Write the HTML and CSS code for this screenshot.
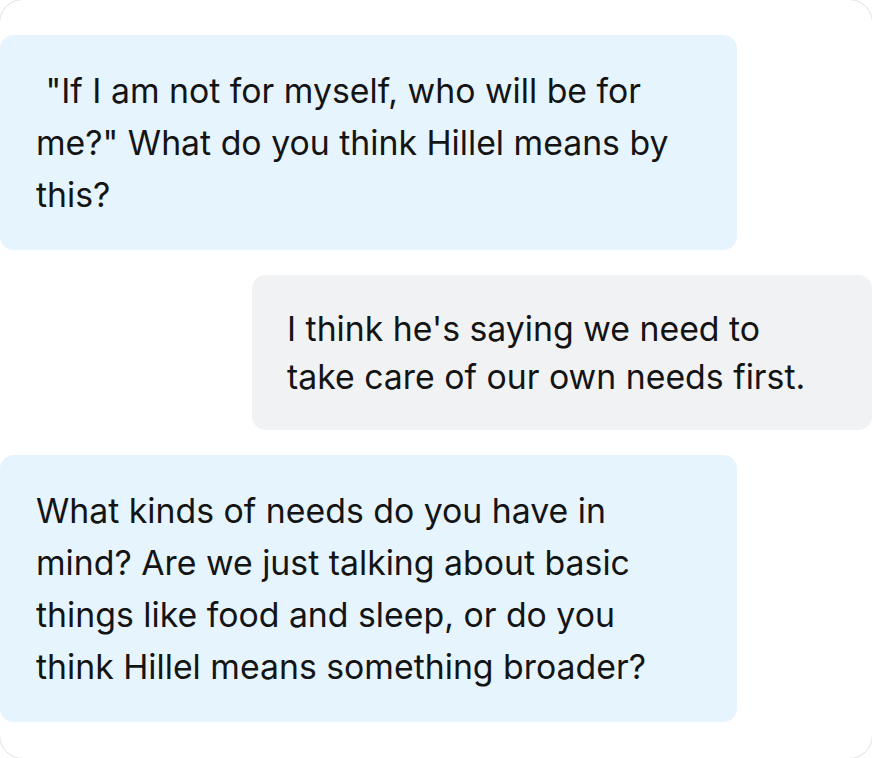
FILE: index.html
```html
<!DOCTYPE html>
<html lang="en">
<head>
<meta charset="utf-8">
<title>Chat</title>
<link rel="stylesheet" href="styles.css">
</head>
<body>
<div class="frame">
  <div class="thread">
    <div class="msg msg-assistant"><p class="text"> "If I am not for myself, who will be for me?" What do you think Hillel means by this?</p></div>
    <div class="msg msg-user"><p class="text">I think he's saying we need to take care of our own needs first.</p></div>
    <div class="msg msg-assistant"><p class="text">What kinds of needs do you have in mind? Are we just talking about basic things like food and sleep, or do you think Hillel means something broader?</p></div>
  </div>
</div>
</body>
</html>
```

FILE: styles.css
```css
html, body {
  margin: 0;
  padding: 0;
  background: #ffffff;
  overflow: hidden;
}
.frame {
  box-sizing: border-box;
  width: 874px;
  height: 760px;
  margin: -1px;
  border: 1px solid #e3e3e3;
  border-radius: 24px;
  background: #ffffff;
}
.thread {
  display: flex;
  flex-direction: column;
  gap: 25px;
  padding-top: 35px;
}
.msg {
  box-sizing: border-box;
  border-radius: 14px;
  padding: 29.5px 36px;
  font-family: "Inter", "Noto Sans", sans-serif;
  font-size: 33.8px;
  color: #141414;
}
.text {
  margin: 0;
  white-space: pre-wrap;
}
.msg-assistant {
  align-self: flex-start;
  width: 737px;
  background: #e6f4fe;
  line-height: 52px;
}
.msg-user {
  align-self: flex-end;
  width: 620px;
  background: #f1f2f4;
  line-height: 48px;
  padding-left: 35px;
}
```
